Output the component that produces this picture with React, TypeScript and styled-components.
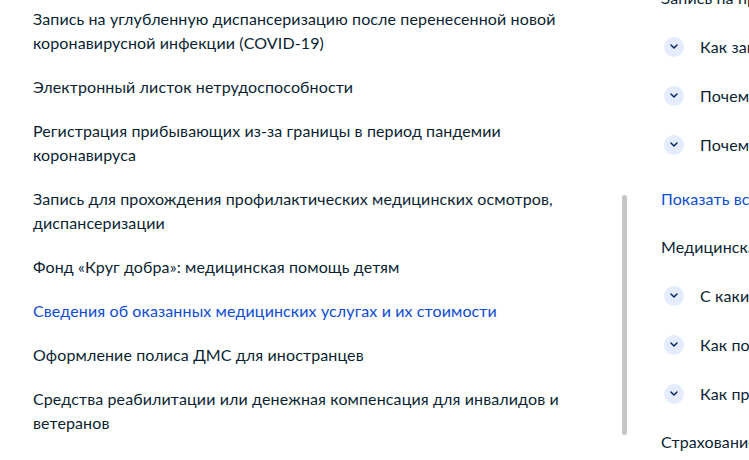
import { Fragment } from 'react';
import styled, { createGlobalStyle } from 'styled-components';

const GlobalStyle = createGlobalStyle`
  html, body {
    margin: 0;
    padding: 0;
    background: #ffffff;
    overflow: hidden;
  }
  body {
    font-family: Lato, 'Noto Sans', sans-serif;
    color: #0b1f33;
    -webkit-font-smoothing: antialiased;
  }
`;

const services = [
  { title: 'Запись на углубленную диспансеризацию после перенесенной новой коронавирусной инфекции (COVID-19)' },
  { title: 'Электронный листок нетрудоспособности' },
  { title: 'Регистрация прибывающих из-за границы в период пандемии коронавируса' },
  { title: 'Запись для прохождения профилактических медицинских осмотров, диспансеризации' },
  { title: 'Фонд «Круг добра»: медицинская помощь детям' },
  { title: 'Сведения об оказанных медицинских услугах и их стоимости', active: true },
  { title: 'Оформление полиса ДМС для иностранцев' },
  { title: 'Средства реабилитации или денежная компенсация для инвалидов и ветеранов' },
];

const faqGroups = [
  {
    title: 'Запись на прием к врачу',
    questions: ['Как записаться к врачу', 'Почему нет врача', 'Почему нет свободного времени'],
    more: true,
  },
  {
    title: 'Медицинская помощь',
    questions: ['С какими документами', 'Как получить полис', 'Как прикрепиться'],
  },
  {
    title: 'Страхование',
    questions: [],
  },
];

const Page = styled.div`
  display: flex;
  align-items: flex-start;
  height: 460px;
  overflow: hidden;
  letter-spacing: 0.12px;
`;

const ServiceList = styled.ul`
  list-style: none;
  margin: 0;
  padding: 7px 0 0 33px;
  width: 550px;
  flex-shrink: 0;
  display: flex;
  flex-direction: column;
  gap: 20px;
`;

const ServiceItem = styled.li<{ $active?: boolean }>`
  font-size: 16px;
  line-height: 24px;
  color: ${({ $active }) => ($active ? '#0d4cd3' : '#0b1f33')};
  cursor: pointer;
`;

const Scrollbar = styled.div`
  flex-shrink: 0;
  width: 5px;
  height: 240px;
  margin: 195px 0 0 39px;
  border-radius: 3px;
  background: #c6c6c6;
`;

const Sidebar = styled.aside`
  flex-shrink: 0;
  margin: -14px 0 0 34px;
  display: flex;
  flex-direction: column;
  gap: 24px;
  white-space: nowrap;
`;

const GroupTitle = styled.div`
  font-size: 16px;
  line-height: 24px;
  color: #0b1f33;
`;

const Question = styled.div`
  display: flex;
  align-items: center;
  gap: 16px;
  height: 25px;
  font-size: 16px;
  line-height: 24px;
  color: #0b1f33;
  padding-left: 3px;
`;

const ChevronCircle = styled.span`
  flex-shrink: 0;
  width: 20px;
  height: 20px;
  border-radius: 50%;
  background: #e4ecfd;
  display: flex;
  align-items: center;
  justify-content: center;
  color: #0d2a5c;
`;

const ShowAll = styled.a`
  margin-top: 6px;
  font-size: 16px;
  line-height: 24px;
  color: #0d4cd3;
  text-decoration: none;
`;

const Chevron = () => (
  <svg width="8" height="5" viewBox="0 0 8 5" fill="none">
    <path d="M1 1l3 3 3-3" stroke="currentColor" strokeWidth="1.5" strokeLinecap="round" strokeLinejoin="round" />
  </svg>
);

export default function App() {
  return (
    <>
      <GlobalStyle />
      <Page>
        <ServiceList>
          {services.map((s) => (
            <ServiceItem key={s.title} $active={s.active}>
              {s.title}
            </ServiceItem>
          ))}
        </ServiceList>
        <Scrollbar />
        <Sidebar>
          {faqGroups.map((g) => (
            <Fragment key={g.title}>
              <GroupTitle>{g.title}</GroupTitle>
              {g.questions.map((q) => (
                <Question key={q}>
                  <ChevronCircle>
                    <Chevron />
                  </ChevronCircle>
                  {q}
                </Question>
              ))}
              {g.more && <ShowAll href="#">Показать все вопросы</ShowAll>}
            </Fragment>
          ))}
        </Sidebar>
      </Page>
    </>
  );
}
